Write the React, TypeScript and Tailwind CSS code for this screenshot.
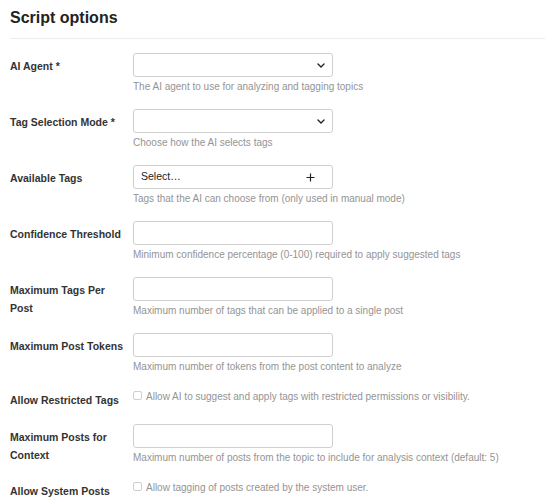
import React from 'react';

type Field =
  | { kind: 'select'; label: string; help: string }
  | { kind: 'tags'; label: string; help: string }
  | { kind: 'input'; label: string; help: string }
  | { kind: 'check'; label: string; help: string };

const FIELDS: Field[] = [
  { kind: 'select', label: 'AI Agent *', help: 'The AI agent to use for analyzing and tagging topics' },
  { kind: 'select', label: 'Tag Selection Mode *', help: 'Choose how the AI selects tags' },
  { kind: 'tags', label: 'Available Tags', help: 'Tags that the AI can choose from (only used in manual mode)' },
  { kind: 'input', label: 'Confidence Threshold', help: 'Minimum confidence percentage (0-100) required to apply suggested tags' },
  { kind: 'input', label: 'Maximum Tags Per Post', help: 'Maximum number of tags that can be applied to a single post' },
  { kind: 'input', label: 'Maximum Post Tokens', help: 'Maximum number of tokens from the post content to analyze' },
  { kind: 'check', label: 'Allow Restricted Tags', help: 'Allow AI to suggest and apply tags with restricted permissions or visibility.' },
  { kind: 'input', label: 'Maximum Posts for Context', help: 'Maximum number of posts from the topic to include for analysis context (default: 5)' },
  { kind: 'check', label: 'Allow System Posts', help: 'Allow tagging of posts created by the system user.' },
];

function Chevron() {
  return (
    <svg width="8" height="5" viewBox="0 0 8 5" className="text-[#222]">
      <path d="M1 1l3 3 3-3" fill="none" stroke="currentColor" strokeWidth="1.4" strokeLinecap="round" strokeLinejoin="round" />
    </svg>
  );
}

function Plus() {
  return (
    <svg width="9" height="9" viewBox="0 0 9 9" className="text-[#222]">
      <path d="M4.5 0.5v8M0.5 4.5h8" fill="none" stroke="currentColor" strokeWidth="1.2" />
    </svg>
  );
}

function Control({ field }: { field: Field }) {
  if (field.kind === 'check') {
    return (
      <label className="flex items-start gap-[4px] pt-[1px]">
        <span className="mt-[1px] w-[9px] h-[9px] shrink-0 rounded-[2px] border border-[#cfcfcf] bg-white" />
        <span className="text-[10px] leading-[14px] text-[#949494] whitespace-nowrap">{field.help}</span>
      </label>
    );
  }
  return (
    <div className="flex flex-col">
      <div className="w-[200px] h-[24px] rounded-[3px] border border-[#cfcfcf] bg-white flex items-center justify-between px-[7px]">
        {field.kind === 'tags' && <span className="text-[10.5px] text-[#222]">Select…</span>}
        {field.kind === 'input' && <span />}
        {field.kind === 'select' && <><span /><Chevron /></>}
        {field.kind === 'tags' && <span className="mr-[10px]"><Plus /></span>}
      </div>
      <div className="mt-[3px] text-[10px] leading-[14px] text-[#949494] whitespace-nowrap">{field.help}</div>
    </div>
  );
}

export default function App() {
  return (
    <div className="w-[545px] h-[500px] bg-white overflow-hidden pl-[10px] font-['Liberation_Sans',Arial,sans-serif]">
      <h1 className="pt-[8px] text-[16px] leading-[20px] font-bold text-[#222]">Script options</h1>
      <div className="mt-[10px] h-px bg-[#ececec]" />

      <div className="mt-[14px] flex flex-col">
        {FIELDS.map((f) => (
          <div key={f.label} className="flex mb-[15px]">
            <div className={`w-[123px] shrink-0 pr-[8px] text-[10.5px] leading-[18px] font-bold text-[#333] ${f.kind === 'check' ? 'pt-[2px]' : 'pt-[4px]'}`}>
              {f.label}
            </div>
            <Control field={f} />
          </div>
        ))}
      </div>
    </div>
  );
}
